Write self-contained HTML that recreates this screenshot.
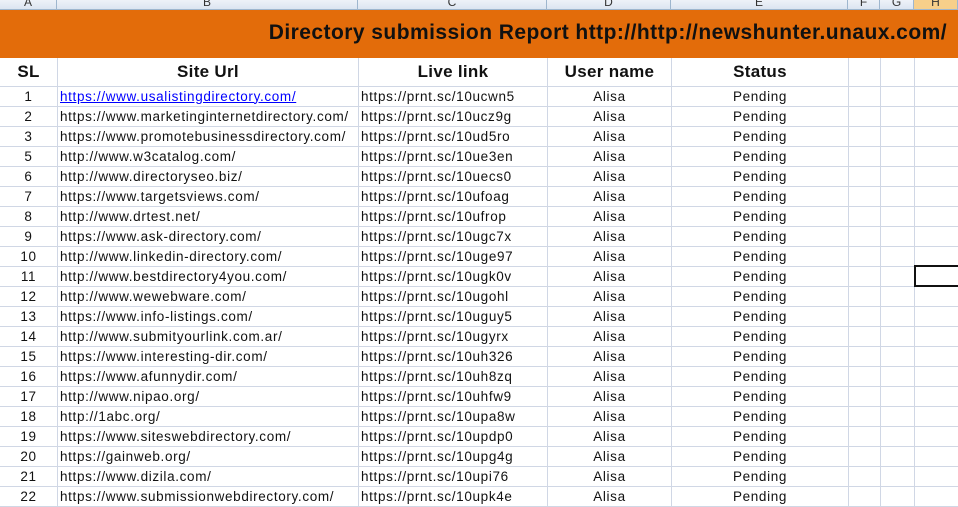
<!DOCTYPE html>
<html><head><meta charset="utf-8"><style>
*{margin:0;padding:0;box-sizing:border-box}
body{width:958px;height:498px;overflow:hidden;background:#fff;font-family:"Liberation Sans",sans-serif;position:relative}
.hdr{position:absolute;top:0;left:0;width:958px;height:10px;background:linear-gradient(#eef2f8,#dce5f1);border-bottom:1px solid #9eb6ce;overflow:hidden}
.hdr div{position:absolute;top:-5px;height:15px;font-size:12px;text-align:center;color:#333;border-right:1px solid #9eb6ce}
.band{position:absolute;top:10px;left:0;width:958px;height:48px;background:#e36c0a;}
.band span{position:absolute;right:11px;top:11px;font-size:21px;font-weight:bold;color:#111;white-space:nowrap;letter-spacing:0.45px}
table{position:absolute;top:58px;left:-1px;border-collapse:collapse;table-layout:fixed;width:960px}
td{border:1px solid #d0d7e5;height:20px;font-size:13.5px;letter-spacing:0.65px;white-space:nowrap;overflow:hidden;padding:0 2px;color:#111;line-height:18px;vertical-align:bottom}
tr.h td{height:28px;font-size:17px;letter-spacing:0.3px;font-weight:bold;text-align:center;border-top:none;vertical-align:middle}
td.c{text-align:center}
a{color:#0000ff;text-decoration:underline}
.sel{position:absolute;left:914px;top:265px;width:50px;height:22px;border:2px solid #111}
</style></head><body>
<div class="hdr">
<div style="left:0;width:57px">A</div><div style="left:57px;width:301px">B</div><div style="left:358px;width:189px">C</div><div style="left:547px;width:124px">D</div><div style="left:671px;width:177px">E</div><div style="left:848px;width:32px">F</div><div style="left:880px;width:34px">G</div><div style="left:914px;width:44px;background:#f7cf8a">H</div>
</div>
<div class="band"><span>Directory submission Report http://http://newshunter.unaux.com/</span></div>
<table>
<colgroup><col style="width:58px"><col style="width:301px"><col style="width:189px"><col style="width:124px"><col style="width:177px"><col style="width:32px"><col style="width:34px"><col style="width:45px"></colgroup>
<tr class="h"><td>SL</td><td>Site Url</td><td>Live link</td><td>User name</td><td>Status</td><td></td><td></td><td></td></tr>
<tr><td class="c">1</td><td><a>https://www.usalistingdirectory.com/</a></td><td>https://prnt.sc/10ucwn5</td><td class="c">Alisa</td><td class="c">Pending</td><td></td><td></td><td></td></tr>
<tr><td class="c">2</td><td>https://www.marketinginternetdirectory.com/</td><td>https://prnt.sc/10ucz9g</td><td class="c">Alisa</td><td class="c">Pending</td><td></td><td></td><td></td></tr>
<tr><td class="c">3</td><td>https://www.promotebusinessdirectory.com/</td><td>https://prnt.sc/10ud5ro</td><td class="c">Alisa</td><td class="c">Pending</td><td></td><td></td><td></td></tr>
<tr><td class="c">5</td><td>http://www.w3catalog.com/</td><td>https://prnt.sc/10ue3en</td><td class="c">Alisa</td><td class="c">Pending</td><td></td><td></td><td></td></tr>
<tr><td class="c">6</td><td>http://www.directoryseo.biz/</td><td>https://prnt.sc/10uecs0</td><td class="c">Alisa</td><td class="c">Pending</td><td></td><td></td><td></td></tr>
<tr><td class="c">7</td><td>https://www.targetsviews.com/</td><td>https://prnt.sc/10ufoag</td><td class="c">Alisa</td><td class="c">Pending</td><td></td><td></td><td></td></tr>
<tr><td class="c">8</td><td>http://www.drtest.net/</td><td>https://prnt.sc/10ufrop</td><td class="c">Alisa</td><td class="c">Pending</td><td></td><td></td><td></td></tr>
<tr><td class="c">9</td><td>https://www.ask-directory.com/</td><td>https://prnt.sc/10ugc7x</td><td class="c">Alisa</td><td class="c">Pending</td><td></td><td></td><td></td></tr>
<tr><td class="c">10</td><td>http://www.linkedin-directory.com/</td><td>https://prnt.sc/10uge97</td><td class="c">Alisa</td><td class="c">Pending</td><td></td><td></td><td></td></tr>
<tr><td class="c">11</td><td>http://www.bestdirectory4you.com/</td><td>https://prnt.sc/10ugk0v</td><td class="c">Alisa</td><td class="c">Pending</td><td></td><td></td><td></td></tr>
<tr><td class="c">12</td><td>http://www.wewebware.com/</td><td>https://prnt.sc/10ugohl</td><td class="c">Alisa</td><td class="c">Pending</td><td></td><td></td><td></td></tr>
<tr><td class="c">13</td><td>https://www.info-listings.com/</td><td>https://prnt.sc/10uguy5</td><td class="c">Alisa</td><td class="c">Pending</td><td></td><td></td><td></td></tr>
<tr><td class="c">14</td><td>http://www.submityourlink.com.ar/</td><td>https://prnt.sc/10ugyrx</td><td class="c">Alisa</td><td class="c">Pending</td><td></td><td></td><td></td></tr>
<tr><td class="c">15</td><td>https://www.interesting-dir.com/</td><td>https://prnt.sc/10uh326</td><td class="c">Alisa</td><td class="c">Pending</td><td></td><td></td><td></td></tr>
<tr><td class="c">16</td><td>https://www.afunnydir.com/</td><td>https://prnt.sc/10uh8zq</td><td class="c">Alisa</td><td class="c">Pending</td><td></td><td></td><td></td></tr>
<tr><td class="c">17</td><td>http://www.nipao.org/</td><td>https://prnt.sc/10uhfw9</td><td class="c">Alisa</td><td class="c">Pending</td><td></td><td></td><td></td></tr>
<tr><td class="c">18</td><td>http://1abc.org/</td><td>https://prnt.sc/10upa8w</td><td class="c">Alisa</td><td class="c">Pending</td><td></td><td></td><td></td></tr>
<tr><td class="c">19</td><td>https://www.siteswebdirectory.com/</td><td>https://prnt.sc/10updp0</td><td class="c">Alisa</td><td class="c">Pending</td><td></td><td></td><td></td></tr>
<tr><td class="c">20</td><td>https://gainweb.org/</td><td>https://prnt.sc/10upg4g</td><td class="c">Alisa</td><td class="c">Pending</td><td></td><td></td><td></td></tr>
<tr><td class="c">21</td><td>https://www.dizila.com/</td><td>https://prnt.sc/10upi76</td><td class="c">Alisa</td><td class="c">Pending</td><td></td><td></td><td></td></tr>
<tr><td class="c">22</td><td>https://www.submissionwebdirectory.com/</td><td>https://prnt.sc/10upk4e</td><td class="c">Alisa</td><td class="c">Pending</td><td></td><td></td><td></td></tr>
</table>
<div class="sel"></div>
</body></html>
